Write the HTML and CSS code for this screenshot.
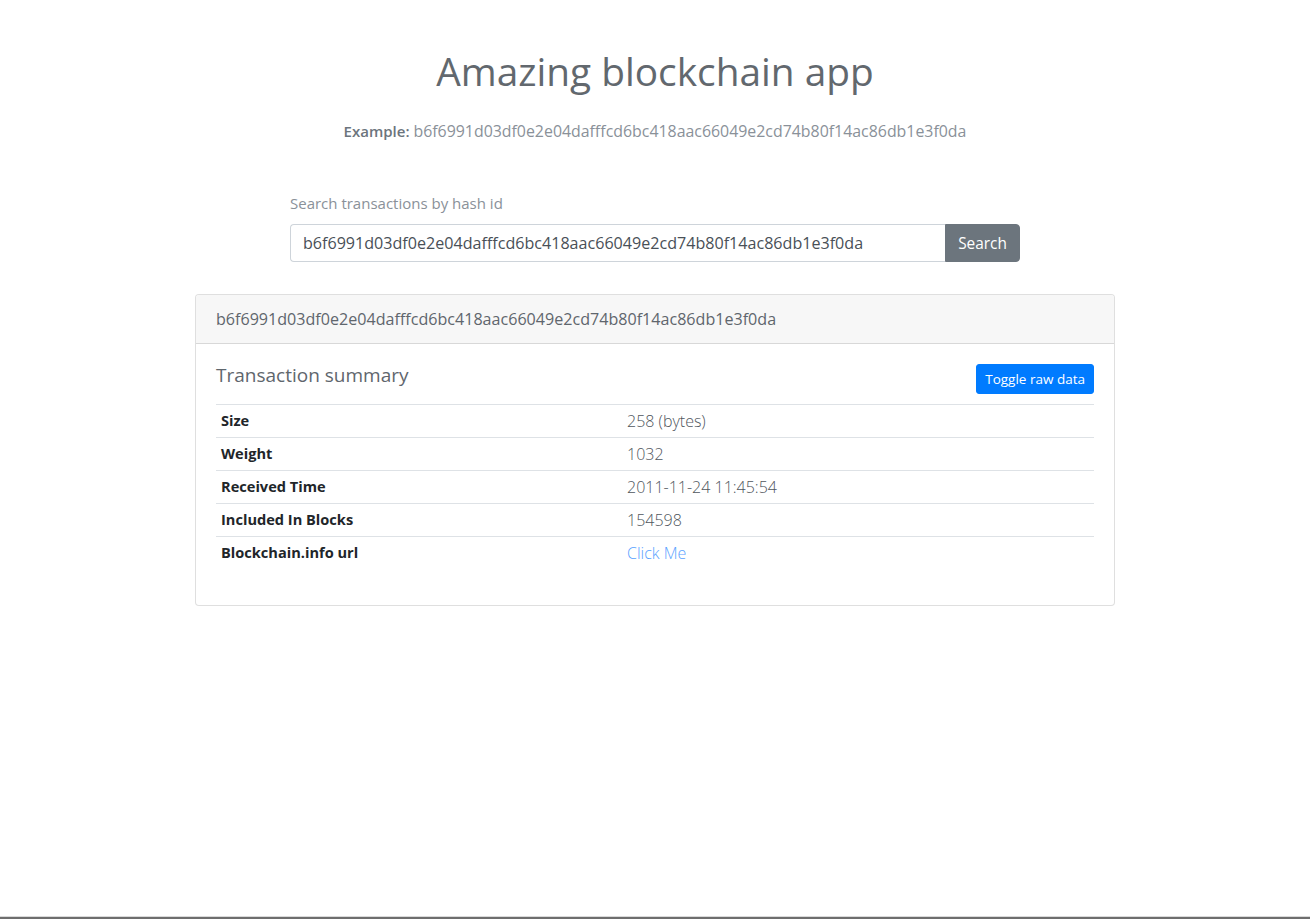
FILE: index.html
```html
<!DOCTYPE html>
<html lang="en">
<head>
<meta charset="utf-8">
<title>Amazing blockchain app</title>
<link rel="stylesheet" href="styles.css">
</head>
<body>
<main class="page">
  <header class="intro">
    <h1 class="title">Amazing blockchain app</h1>
    <p class="example"><span class="example-label">Example:</span> <span class="example-hash">b6f6991d03df0e2e04dafffcd6bc418aac66049e2cd74b80f14ac86db1e3f0da</span></p>
  </header>

  <form class="search">
    <label class="search-label" for="hash">Search transactions by hash id</label>
    <div class="input-group">
      <input id="hash" class="search-input" type="text" value="b6f6991d03df0e2e04dafffcd6bc418aac66049e2cd74b80f14ac86db1e3f0da">
      <button class="btn btn-search" type="button">Search</button>
    </div>
  </form>

  <section class="card">
    <div class="card-header">b6f6991d03df0e2e04dafffcd6bc418aac66049e2cd74b80f14ac86db1e3f0da</div>
    <div class="card-body">
      <div class="summary-head">
        <h5 class="summary-title">Transaction summary</h5>
        <button class="btn btn-toggle" type="button">Toggle raw data</button>
      </div>
      <table class="summary-table">
        <tbody>
          <tr><th>Size</th><td>258 (bytes)</td></tr>
          <tr><th>Weight</th><td>1032</td></tr>
          <tr><th>Received Time</th><td>2011-11-24 11:45:54</td></tr>
          <tr><th>Included In Blocks</th><td>154598</td></tr>
          <tr><th>Blockchain.info url</th><td><a class="link" href="#">Click Me</a></td></tr>
        </tbody>
      </table>
    </div>
  </section>
</main>
<div class="frame-edge"></div>
</body>
</html>
```

FILE: styles.css
```css
* { box-sizing: border-box; }

html, body {
  margin: 0;
  padding: 0;
  background: #fff;
}

body {
  font-family: "Open Sans", "Noto Sans", sans-serif;
  font-size: 16px;
  line-height: 1.5;
  color: #212529;
}

.page {
  width: 920px;
  margin: 0 auto;
  padding-top: 47px;
}

.intro {
  text-align: center;
}

.title {
  margin: 0;
  font-size: 38.8px;
  font-weight: 400;
  line-height: 48px;
  color: #62686e;
}

.example {
  margin: 25px 0 0;
  font-size: 15px;
  line-height: 22px;
}

.example-label {
  font-weight: 600;
  color: #6c757d;
}

.example-hash {
  font-size: 15.9px;
  color: #8a9199;
}

.search {
  width: 730px;
  margin: 50px auto 0;
}

.search-label {
  display: block;
  font-size: 15px;
  line-height: 22px;
  color: #8a9199;
  margin-bottom: 10px;
}

.input-group {
  display: flex;
  height: 38px;
}

.search-input {
  flex: 1;
  min-width: 0;
  height: 38px;
  padding: 0 12px;
  font-family: inherit;
  font-size: 16.1px;
  color: #495057;
  border: 1px solid #ced4da;
  border-right: 0;
  border-radius: 4px 0 0 4px;
  outline: none;
}

.btn {
  font-family: inherit;
  border: 1px solid transparent;
  color: #fff;
  cursor: pointer;
}

.btn-search {
  width: 75px;
  height: 38px;
  font-size: 15.4px;
  background: #6c757d;
  border-color: #6c757d;
  border-radius: 0 4px 4px 0;
}

.card {
  margin-top: 32px;
  border: 1px solid rgba(0, 0, 0, 0.125);
  border-radius: 4px;
  background: #fff;
}

.card-header {
  height: 49px;
  padding: 0 20px;
  display: flex;
  align-items: center;
  background: #f7f7f7;
  border-bottom: 1px solid rgba(0, 0, 0, 0.125);
  border-radius: 3px 3px 0 0;
  font-size: 16.1px;
  color: #5f666d;
}

.card-body {
  padding: 20px 20px 19px;
}

.summary-head {
  display: flex;
  justify-content: space-between;
  align-items: flex-start;
  height: 40px;
}

.summary-title {
  margin: 0;
  font-size: 19px;
  font-weight: 400;
  line-height: 22px;
  color: #5f666d;
}

.btn-toggle {
  height: 30px;
  padding: 0 8px;
  font-size: 13.5px;
  background: #007bff;
  border-color: #007bff;
  border-radius: 3px;
}

.summary-table {
  width: 100%;
  border-collapse: collapse;
  margin-bottom: 16px;
}

.summary-table th,
.summary-table td {
  height: 33px;
  padding: 0 5px;
  border-top: 1px solid #dee2e6;
  text-align: left;
  vertical-align: middle;
}

.summary-table th {
  width: 406px;
  font-size: 14.6px;
  font-weight: 700;
  color: #212529;
}

.summary-table td {
  font-size: 16px;
  font-weight: 300;
  color: #4f565d;
}

.link {
  color: #5aa2ff;
  text-decoration: none;
}

.frame-edge {
  position: fixed;
  left: 0;
  right: 0;
  bottom: 0;
  height: 3px;
  background: #6e6e6e;
  border-top: 1px solid #d9d9d9;
}
```
